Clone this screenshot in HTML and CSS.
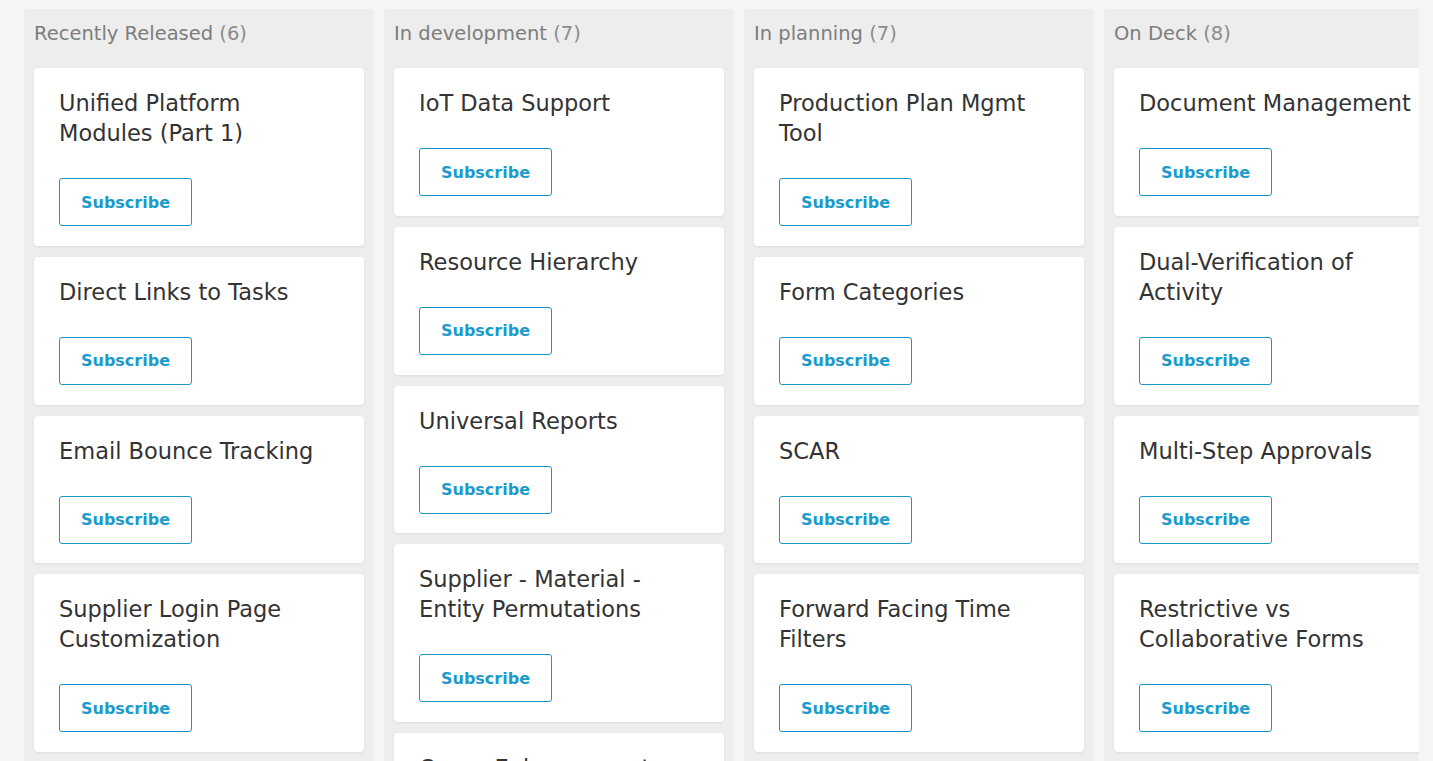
FILE: index.html
```html
<!DOCTYPE html>
<html lang="en">
<head>
<meta charset="UTF-8">
<title>Roadmap</title>

<link rel="stylesheet" href="styles.css">

</head>
<body>

<div class="board">
    <div class="column">
        <div class="column-title">Recently Released <span class="count">(6)</span></div>

        <div class="card">
            <div class="card-title">Unified Platform Modules (Part 1)</div>
            <button type="button" class="subscribe">Subscribe</button>
        </div>
        <div class="card">
            <div class="card-title">Direct Links to Tasks</div>
            <button type="button" class="subscribe">Subscribe</button>
        </div>
        <div class="card">
            <div class="card-title">Email Bounce Tracking</div>
            <button type="button" class="subscribe">Subscribe</button>
        </div>
        <div class="card">
            <div class="card-title">Supplier Login Page Customization</div>
            <button type="button" class="subscribe">Subscribe</button>
        </div>
        <div class="card">
            <div class="card-title">Audit Trail Export</div>
            <button type="button" class="subscribe">Subscribe</button>
        </div>
    </div>

    <div class="column">
        <div class="column-title">In development <span class="count">(7)</span></div>

        <div class="card">
            <div class="card-title">IoT Data Support</div>
            <button type="button" class="subscribe">Subscribe</button>
        </div>
        <div class="card">
            <div class="card-title">Resource Hierarchy</div>
            <button type="button" class="subscribe">Subscribe</button>
        </div>
        <div class="card">
            <div class="card-title">Universal Reports</div>
            <button type="button" class="subscribe">Subscribe</button>
        </div>
        <div class="card">
            <div class="card-title">Supplier - Material - Entity Permutations</div>
            <button type="button" class="subscribe">Subscribe</button>
        </div>
        <div class="card">
            <div class="card-title">Query Enhancements</div>
            <button type="button" class="subscribe">Subscribe</button>
        </div>
    </div>

    <div class="column">
        <div class="column-title">In planning <span class="count">(7)</span></div>

        <div class="card">
            <div class="card-title">Production Plan Mgmt Tool</div>
            <button type="button" class="subscribe">Subscribe</button>
        </div>
        <div class="card">
            <div class="card-title">Form Categories</div>
            <button type="button" class="subscribe">Subscribe</button>
        </div>
        <div class="card">
            <div class="card-title">SCAR</div>
            <button type="button" class="subscribe">Subscribe</button>
        </div>
        <div class="card">
            <div class="card-title">Forward Facing Time Filters</div>
            <button type="button" class="subscribe">Subscribe</button>
        </div>
        <div class="card">
            <div class="card-title">Shift Scheduling</div>
            <button type="button" class="subscribe">Subscribe</button>
        </div>
    </div>

    <div class="column">
        <div class="column-title">On Deck <span class="count">(8)</span></div>

        <div class="card">
            <div class="card-title">Document Management</div>
            <button type="button" class="subscribe">Subscribe</button>
        </div>
        <div class="card">
            <div class="card-title">Dual-Verification of Activity</div>
            <button type="button" class="subscribe">Subscribe</button>
        </div>
        <div class="card">
            <div class="card-title">Multi-Step Approvals</div>
            <button type="button" class="subscribe">Subscribe</button>
        </div>
        <div class="card">
            <div class="card-title">Restrictive vs Collaborative Forms</div>
            <button type="button" class="subscribe">Subscribe</button>
        </div>
        <div class="card">
            <div class="card-title">Offline Mode</div>
            <button type="button" class="subscribe">Subscribe</button>
        </div>
    </div>
</div>

</body>
</html>
```

FILE: styles.css
```css
html, body {
    height: 100%;
}

body {
    font-family: "DejaVu Sans", "Open Sans", sans-serif;
    margin: 0;
    padding: 0;
    background-color: #f5f5f5;
    overflow: hidden;
}

.board {
    display: flex;
    gap: 10px;
    width: 1419px;
    box-sizing: border-box;
    padding: 9px 0 0 24px;
    overflow: hidden;
}

.column {
    flex: 0 0 350px;
    box-sizing: border-box;
    padding: 0 10px 10px;
    background-color: #ededed;
    border-radius: 4px;
}

.column-title {
    padding: 11px 0 20px;
    font-size: 19.5px;
    line-height: 28px;
    color: #7d7d7d;
}

.count {
    color: #8c8c8c;
}

.card {
    width: 330px;
    box-sizing: border-box;
    margin-bottom: 11px;
    padding: 20px 25px 19.75px;
    background-color: #fff;
    border-radius: 4px;
    box-shadow: 0 1px 3px rgba(0, 0, 0, 0.07);
}

.card-title {
    margin-bottom: 30px;
    font-size: 22.5px;
    line-height: 30px;
    color: #333;
}

.subscribe {
    display: block;
    width: 133px;
    height: 48px;
    padding: 0;
    background-color: #fff;
    border: 1px solid #1a97c7;
    border-radius: 3px;
    font-family: inherit;
    font-size: 16px;
    font-weight: 700;
    color: #1a9bcb;
    cursor: pointer;
}
```
